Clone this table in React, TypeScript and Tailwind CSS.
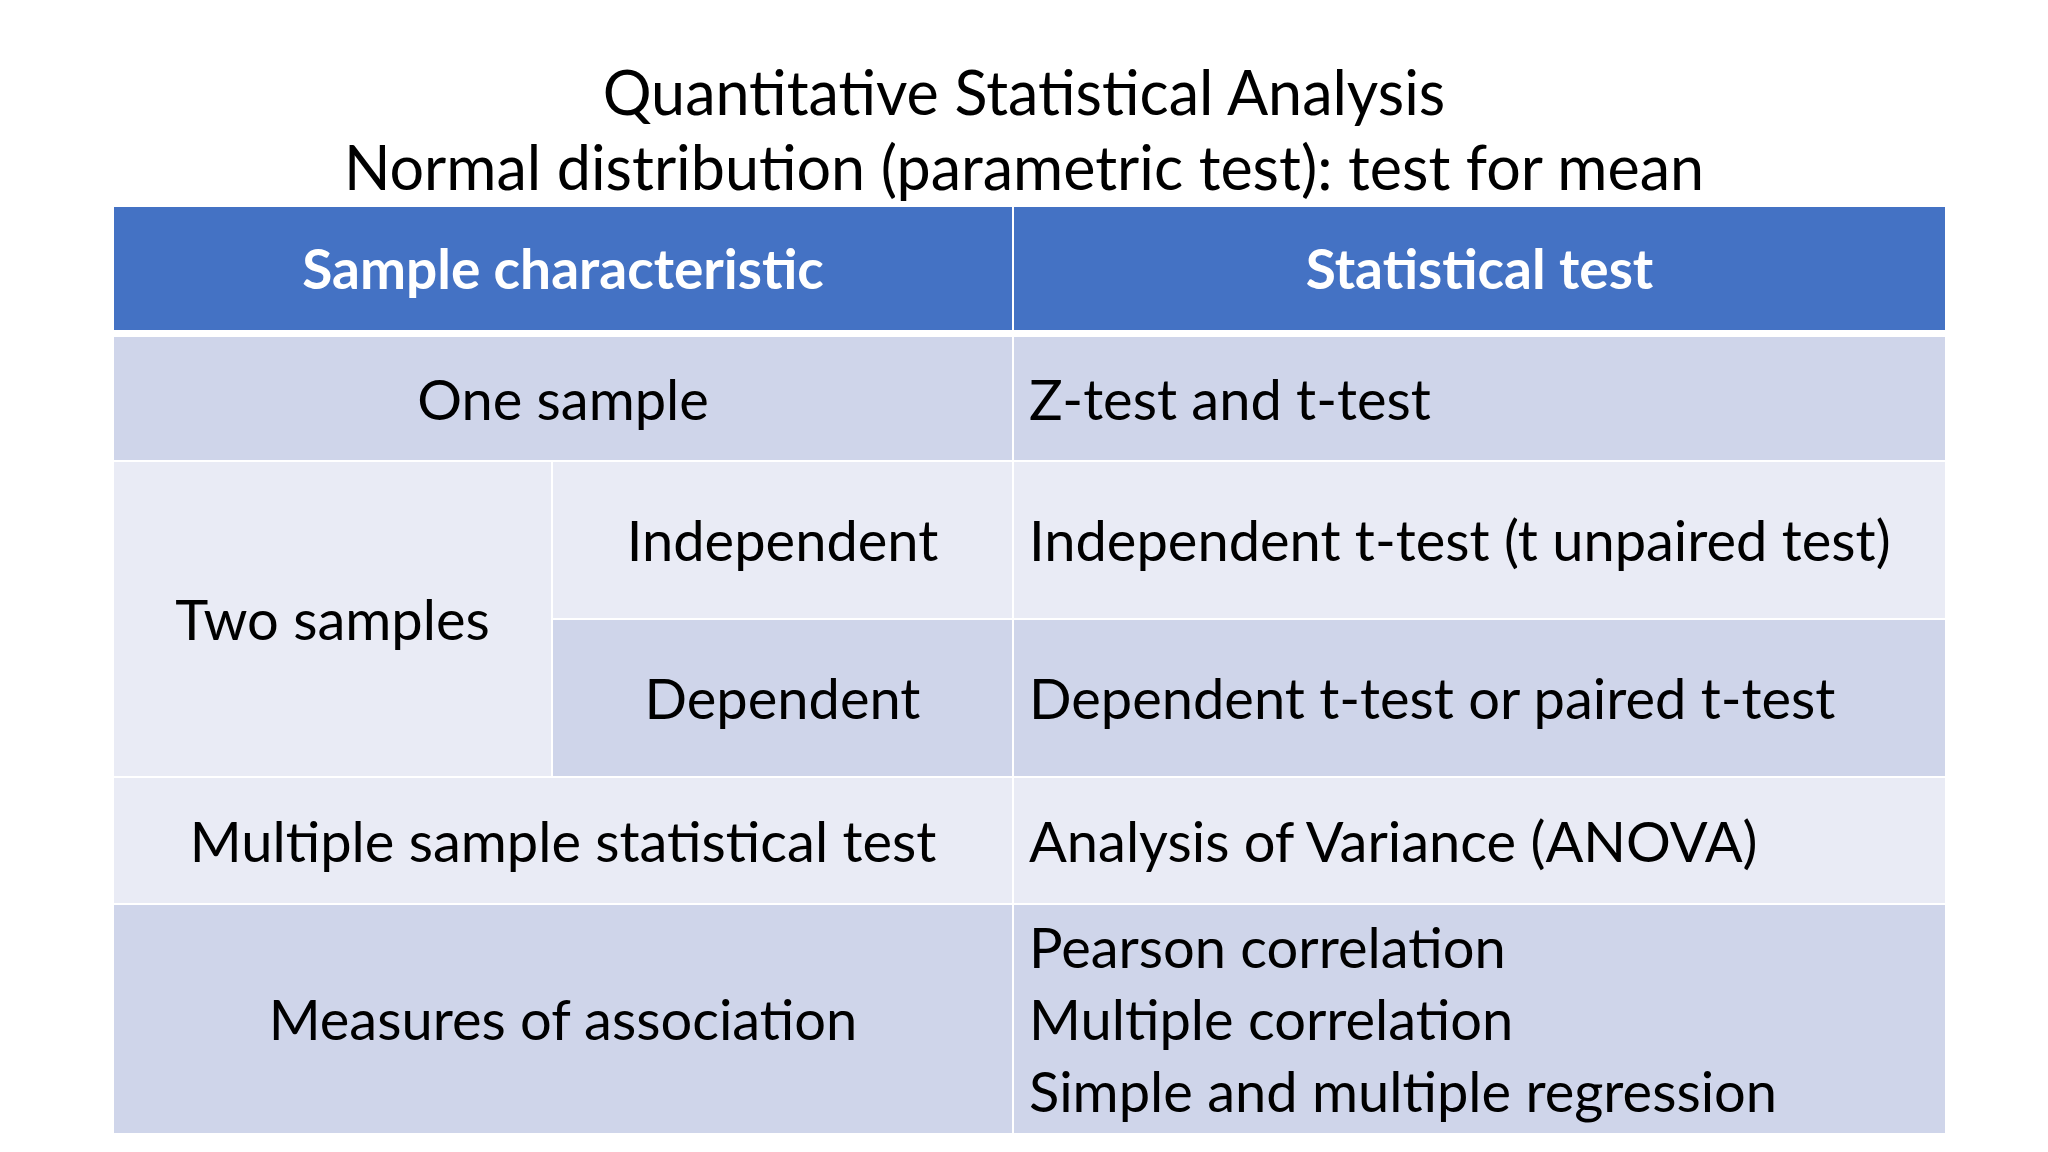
import React from "react";

const font = { fontFamily: "Lato, 'Open Sans', sans-serif" };

export default function App() {
  const dark = "bg-[#CFD5EA]";
  const light = "bg-[#E9EBF5]";
  return (
    <div className="w-[2048px] h-[1152px] bg-white overflow-hidden" style={font}>
      <div className="pt-[54px] h-[207px] text-center text-black text-[61px] leading-[75px]">
        <div>Quantitative Statistical Analysis</div>
        <div>Normal distribution (parametric test): test for mean</div>
      </div>
      <div className="ml-[114px] w-[1831px]">
        <div className="flex gap-[2px] h-[123px] text-white font-bold text-[55px]">
          <div className="w-[898px] bg-[#4472C4] flex items-center justify-center">Sample characteristic</div>
          <div className="flex-1 bg-[#4472C4] flex items-center justify-center">Statistical test</div>
        </div>
        <div className="mt-[7px] grid grid-cols-[437px_459px_931px] grid-rows-[123px_156px_156px_125px_228px] gap-[2px] text-[56px] text-black">
          <div className={`col-span-2 ${dark} flex items-center justify-center`}>One sample</div>
          <div className={`${dark} flex items-center pl-[15px]`}>Z-test and t-test</div>

          <div className={`row-span-2 ${light} flex items-center justify-center`}>Two samples</div>
          <div className={`${light} flex items-center justify-center`}>Independent</div>
          <div className={`${light} flex items-center pl-[15px]`}>Independent t-test (t unpaired test)</div>
          <div className={`${dark} flex items-center justify-center`}>Dependent</div>
          <div className={`${dark} flex items-center pl-[15px]`}>Dependent t-test or paired t-test</div>

          <div className={`col-span-2 ${light} flex items-center justify-center`}>Multiple sample statistical test</div>
          <div className={`${light} flex items-center pl-[15px]`}>Analysis of Variance (ANOVA)</div>

          <div className={`col-span-2 ${dark} flex items-center justify-center`}>Measures of association</div>
          <div className={`${dark} flex flex-col justify-center pl-[15px] leading-[72px]`}>
            <div>Pearson correlation</div>
            <div>Multiple correlation</div>
            <div>Simple and multiple regression</div>
          </div>
        </div>
      </div>
    </div>
  );
}
